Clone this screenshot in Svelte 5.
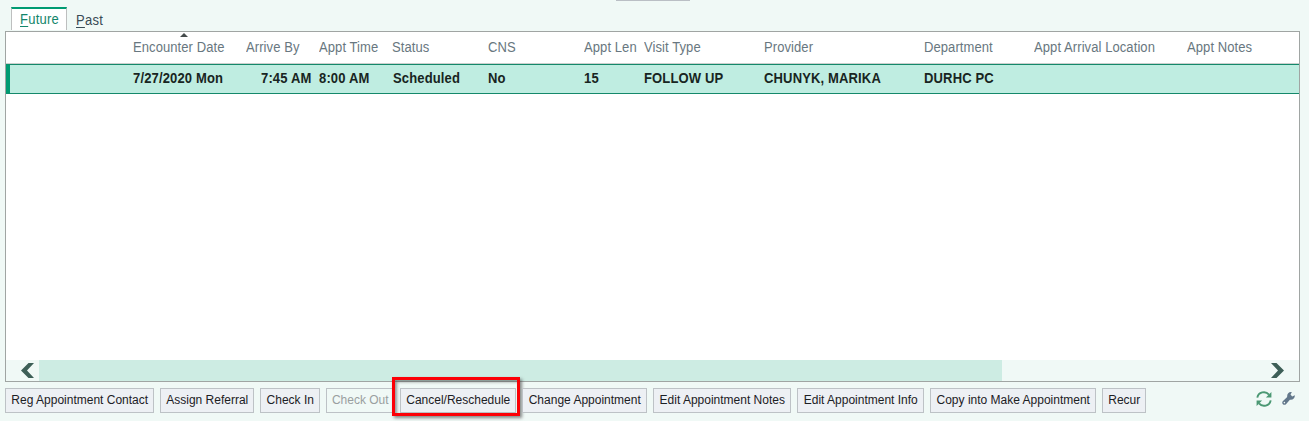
<script>
  const columns = [
    { label: 'Encounter Date', value: '7/27/2020 Mon', width: 113, sorted: true },
    { label: 'Arrive By', value: '7:45 AM', width: 73, indent: 15 },
    { label: 'Appt Time', value: '8:00 AM', width: 73 },
    { label: 'Status', value: 'Scheduled', width: 96, indent: 1 },
    { label: 'CNS', value: 'No', width: 96 },
    { label: 'Appt Len', value: '15', width: 60 },
    { label: 'Visit Type', value: 'FOLLOW UP', width: 120 },
    { label: 'Provider', value: 'CHUNYK, MARIKA', width: 160 },
    { label: 'Department', value: 'DURHC PC', width: 110 },
    { label: 'Appt Arrival Location', value: '', width: 153 },
    { label: 'Appt Notes', value: '', width: 112 }
  ];
  const actions = [
    { label: 'Reg Appointment Contact', width: 149 },
    { label: 'Assign Referral', width: 94 },
    { label: 'Check In', width: 60 },
    { label: 'Check Out', width: 68, disabled: true },
    { label: 'Cancel/Reschedule', width: 116, marked: true },
    { label: 'Change Appointment', width: 125 },
    { label: 'Edit Appointment Notes', width: 138 },
    { label: 'Edit Appointment Info', width: 127 },
    { label: 'Copy into Make Appointment', width: 166 },
    { label: 'Recur', width: 44 }
  ];
</script>

<main class="panel">
  <div class="grip"></div>
  <nav class="tabs">
    <div class="tab active"><span class="text"><span class="key">F</span>uture</span></div>
    <div class="tab"><span class="text"><span class="key">P</span>ast</span></div>
  </nav>
  <section class="list">
    <div class="row head">
      {#each columns as c}
        <div class="cell" style:width="{c.width}px">
          <span class="text">{c.label}</span>
          {#if c.sorted}
            <svg class="sort" width="8" height="4" viewBox="0 0 8 4"><path d="M4 0 8 4H0Z" fill="#444b4b" /></svg>
          {/if}
        </div>
      {/each}
    </div>
    <div class="row record">
      {#each columns as c}
        <div class="cell" style:width="{c.width}px" style:padding-left="{c.indent ?? 0}px"><span class="text">{c.value}</span></div>
      {/each}
    </div>
    <div class="space"></div>
    <div class="scroll">
      <div class="arrow left"><svg width="13" height="15" viewBox="0 0 13 15"><path d="M7.5 0H13L6 7.5 13 15H7.5L0 7.5Z" fill="#3d5f57" /></svg></div>
      <div class="thumb"></div>
      <div class="arrow right"><svg width="13" height="15" viewBox="0 0 13 15"><path d="M5.5 0H0L7 7.5 0 15H5.5L13 7.5Z" fill="#3d5f57" /></svg></div>
    </div>
  </section>
  <footer class="actions">
    {#each actions as a}
      <div class="slot">
        <button class:disabled={a.disabled} disabled={a.disabled} style:width="{a.width}px">{a.label}</button>
        {#if a.marked}<div class="mark"></div>{/if}
      </div>
    {/each}
    <div class="tools">
      <svg width="16" height="16" viewBox="0 0 16 16">
        <path d="M1.3 6.7A6.7 6.7 0 0 1 13 3.6M14.7 9.3A6.7 6.7 0 0 1 3 12.4" fill="none" stroke="#4b9873" stroke-width="1.9" />
        <path d="M15.4 1V6.5H9.9ZM.6 15V9.5H6.1Z" fill="#4b9873" />
      </svg>
      <svg width="13" height="13" viewBox="0 0 13 13">
        <path d="M9.8.2 8.5 2.5 10.2 4.5 12.8 3.2C13.2 6 11 8.3 7.9 7.7L4.2 12C3.2 13.1 1.8 13.1.9 12.2 0 11.3 0 9.9 1 8.9L5.2 5C4.7 2 6.9-.4 9.8.2ZM2.4 9.8A.8.8 0 1 0 2.4 11.4.8.8 0 1 0 2.4 9.8Z" fill="#63788b" fill-rule="evenodd" />
      </svg>
    </div>
  </footer>
</main>

<style>
  :global(body) { margin: 0; background: #f0f9f6; }
  .panel {
    position: relative; box-sizing: border-box; width: 1309px; height: 421px;
    padding: 7px 9px 0 5px; background: #f0f9f6; overflow: hidden;
    font-family: "Liberation Sans", Arial, sans-serif; font-size: 14px;
    display: flex; flex-direction: column;
  }
  .text { display: inline-block; transform: scaleX(.93); transform-origin: left center; white-space: nowrap; letter-spacing: .15px; }
  .grip { position: absolute; left: 616px; top: 0; width: 74px; height: 1px; background: #babfc5; }
  .tabs { display: flex; height: 24px; flex: none; padding-left: 6px; }
  .tab { box-sizing: border-box; height: 23px; padding: 6px 9px 0; line-height: 15px; color: #394a54; }
  .tab.active {
    width: 56px; padding: 3px 0 0 8px; border: 1px solid #bdbfbf; border-top: 2px solid #009b72;
    border-bottom: 0; background: #fff; color: #13856b;
  }
  .key { text-decoration: underline; text-underline-offset: 2px; text-decoration-thickness: 1px; }
  .list {
    box-sizing: border-box; width: 1295px; height: 351px; flex: none; border: 1px solid #a0a5a3;
    background: #fff; display: flex; flex-direction: column;
  }
  .row { box-sizing: border-box; display: flex; padding-left: 127px; white-space: nowrap; }
  .cell { box-sizing: border-box; flex: none; }
  .head { height: 32px; border-bottom: 1px solid #cbd0ce; line-height: 31px; color: #687780; }
  .head .cell { position: relative; }
  .head .text { letter-spacing: .08px; margin-left: -.4px; }
  .tab .text { letter-spacing: .25px; }
  .sort { position: absolute; left: 47px; top: 1px; }
  .record {
    height: 30px; padding-left: 123px; border: solid #14886a; border-width: 1px 0 1px 4px;
    border-left-color: #009b72; background: #bfede1; color: #182522; font-weight: bold;
    line-height: 27px;
  }
  .space { flex: 1; }
  .scroll { display: flex; height: 21px; background: #f0f9f6; }
  .arrow { width: 33px; display: flex; align-items: center; }
  .arrow svg { margin-left: 15px; }
  .thumb { width: 963px; background: #cdece3; }
  .arrow.right { margin-left: auto; width: 43px; }
  .arrow.right svg { margin-left: 15px; }
  .actions { display: flex; gap: 6px; padding-top: 6px; height: 25px; }
  .slot { position: relative; }
  button {
    box-sizing: border-box; height: 25px; padding: 0 0 0 .5px; border: 1px solid #bdc2c6; border-radius: 0;
    background: #edf0f4; color: #1c2024; font: 12px/23px "Liberation Sans", Arial, sans-serif;
    text-align: center; white-space: nowrap; display: block;
  }
  button.disabled { background: #f0f9f6; color: #9a9fa0; }
  .mark {
    position: absolute; left: -8px; top: -11px; width: 122px; height: 33px; border: 3px solid #fc0006;
    box-shadow: 2px 2px 3px rgba(60, 60, 60, .6), inset 2px 2px 3px rgba(60, 60, 60, .5);
  }
  .tools { display: flex; align-items: center; gap: 10px; margin-left: auto; padding-right: 5px; }
  .tools svg { position: relative; top: -2px; }
</style>
